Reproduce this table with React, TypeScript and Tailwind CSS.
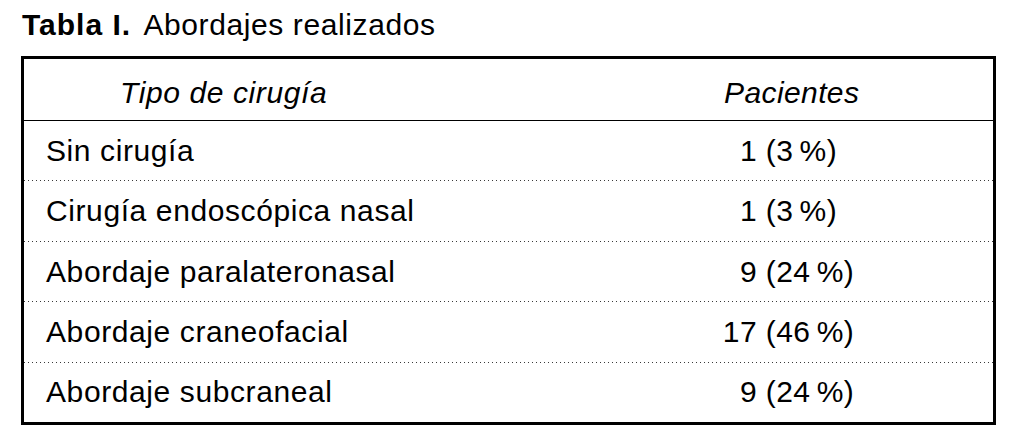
import React from "react";

const rows: { label: string; n: string; pct: string }[] = [
  { label: "Sin cirugía", n: "1", pct: "3" },
  { label: "Cirugía endoscópica nasal", n: "1", pct: "3" },
  { label: "Abordaje paralateronasal", n: "9", pct: "24" },
  { label: "Abordaje craneofacial", n: "17", pct: "46" },
  { label: "Abordaje subcraneal", n: "9", pct: "24" },
];

function Dots() {
  return (
    <div className="h-px w-full bg-[repeating-linear-gradient(to_right,#3a3a3a_0px,#3a3a3a_1px,transparent_1px,transparent_4px)]" />
  );
}

export default function App() {
  return (
    <div
      className="w-[1012px] h-[434px] bg-white text-black overflow-hidden"
      style={{ fontFamily: '"Liberation Sans", Arial, Helvetica, sans-serif' }}
    >
      <div className="pt-[10px] pl-[22px] text-[30px] leading-[30px] tracking-[0.6px]">
        <span className="font-bold tracking-[1px]">Tabla I.</span>
        <span className="ml-[5px]"> Abordajes realizados</span>
      </div>
      <div className="mt-[16px] ml-[21px] w-[975px] h-[369px] border-[3px] border-black flex flex-col text-[30px] leading-[30px] tracking-[0.6px]">
        <div className="h-[62px] shrink-0 border-b border-black flex pt-[6px] items-center italic">
          <div className="w-[676px] pl-[96px]">Tipo de cirugía</div>
          <div className="pl-[24px] tracking-[0.4px]">Pacientes</div>
        </div>
        <div className="flex-1 flex flex-col">
          {rows.map((r, i) => (
            <React.Fragment key={i}>
              {i > 0 && <Dots />}
              <div className="flex-1 flex items-center">
                <div className="w-[676px] pl-[22px]">{r.label}</div>
                <div className="pl-[19px] flex tracking-[0.4px]">
                  <span className="w-[38px] text-right inline-block">{r.n}</span>
                  <span>{"\u00a0(" + r.pct + "\u2009%)"}</span>
                </div>
              </div>
            </React.Fragment>
          ))}
        </div>
      </div>
    </div>
  );
}
